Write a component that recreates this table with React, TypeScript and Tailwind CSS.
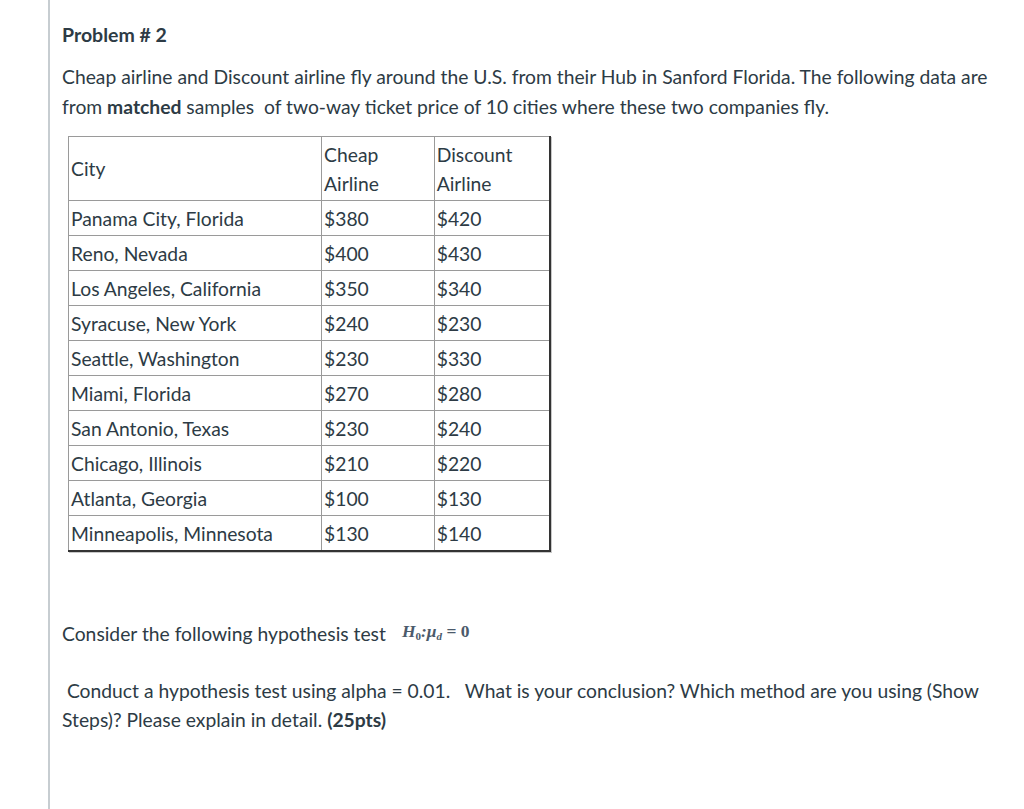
const rows: [string, string, string][] = [
  ["Panama City, Florida", "$380", "$420"],
  ["Reno, Nevada", "$400", "$430"],
  ["Los Angeles, California", "$350", "$340"],
  ["Syracuse, New York", "$240", "$230"],
  ["Seattle, Washington", "$230", "$330"],
  ["Miami, Florida", "$270", "$280"],
  ["San Antonio, Texas", "$230", "$240"],
  ["Chicago, Illinois", "$210", "$220"],
  ["Atlanta, Georgia", "$100", "$130"],
  ["Minneapolis, Minnesota", "$130", "$140"],
];

const cell = "border border-[#9a9a9a] px-[2px] py-[2.5px] align-middle text-left font-normal";

export default function App() {
  return (
    <div className="min-h-[809px] w-[1024px] bg-white pl-[48px] font-['Lato','Liberation_Sans',sans-serif] text-[#2d3b45]">
      <div className="min-h-[809px] border-l-2 border-[#c7cdd1] pl-[12px] pr-[20px] pt-[20px]">
        <h2 className="text-[19.5px] font-bold leading-[30px]">Problem # 2</h2>
        <p className="mt-[12px] text-[19.3px] leading-[30px]">
          Cheap airline and Discount airline fly around the U.S. from their Hub in Sanford Florida. The following data are
          from <strong className="font-bold">matched</strong> samples&nbsp; of two-way ticket price of 10 cities where these two companies fly.
        </p>
        <table className="ml-[6px] mt-[14px] w-[483px] border-collapse border-t border-l border-r-2 border-b-2 border-[#333] text-[19.3px] leading-[29px] shadow-[1px_1px_0_#c8c8c8]">
          <colgroup>
            <col className="w-[254px]" />
            <col className="w-[113px]" />
            <col className="w-[116px]" />
          </colgroup>
          <thead>
            <tr>
              <th className={cell}>City</th>
              <th className={cell}>
                Cheap
                <br />
                Airline
              </th>
              <th className={cell}>
                Discount
                <br />
                Airline
              </th>
            </tr>
          </thead>
          <tbody>
            {rows.map((r) => (
              <tr key={r[0]}>
                <td className={cell}>{r[0]}</td>
                <td className={cell}>{r[1]}</td>
                <td className={cell}>{r[2]}</td>
              </tr>
            ))}
          </tbody>
        </table>
        <p className="mt-[67px] flex items-center text-[19.3px] leading-[30px]">
          Consider the following hypothesis test
          <span className="ml-[16px] -mt-[6px] font-['Liberation_Serif',serif] text-[17.5px] font-bold italic text-[#4b5a6b]">
            H<sub className="text-[11px] not-italic">0</sub>:μ<sub className="text-[11px]">d</sub>
            <span className="not-italic"> = 0</span>
          </span>
        </p>
        <p className="mt-[27px] text-[19.3px] leading-[29px]">
          &nbsp;Conduct a hypothesis test using alpha = 0.01.&nbsp;&nbsp; What is your conclusion? Which method are you using (Show
          Steps)? Please explain in detail. <strong className="font-bold">(25pts)</strong>
        </p>
      </div>
    </div>
  );
}
